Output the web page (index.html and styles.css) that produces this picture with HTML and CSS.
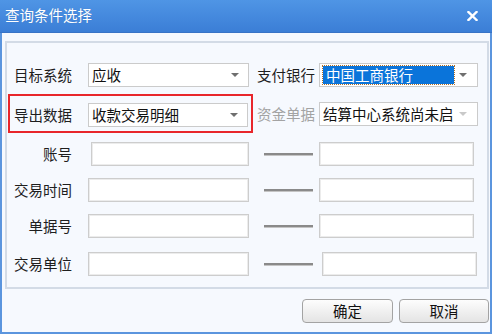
FILE: index.html
```html
<!DOCTYPE html>
<html lang="zh-CN">
<head>
    <meta charset="UTF-8">
    <title>查询条件选择</title>
    <link rel="stylesheet" href="styles.css">
</head>
<body>
    <div class="window">
        <div class="titlebar">
            <span class="title">查询条件选择</span>
            <svg class="close" width="11" height="10" viewBox="0 0 11 10">
                <path d="M1.5 1 L9.5 9 M9.5 1 L1.5 9" stroke="#fff" stroke-width="2.4" stroke-linecap="square"/>
            </svg>
        </div>

        <div class="window-body">
            <div class="group">
                <div class="row row-1">
                    <div class="left">
                        <label class="label">目标系统</label>
                        <div class="select select-left"><span class="value">应收</span><i class="arrow"></i></div>
                    </div>
                    <div class="right">
                        <label class="label">支付银行</label>
                        <div class="select select-right"><span class="selected">中国工商银行</span><i class="arrow"></i></div>
                    </div>
                </div>

                <div class="row row-2">
                    <div class="left highlight">
                        <label class="label">导出数据</label>
                        <div class="select select-left"><span class="value">收款交易明细</span><i class="arrow"></i></div>
                    </div>
                    <div class="right">
                        <label class="label disabled">资金单据</label>
                        <div class="select select-right"><span class="value">结算中心系统尚未启</span><i class="arrow arrow-disabled"></i></div>
                    </div>
                </div>

                <div class="row row-3">
                    <div class="left">
                        <label class="label">账号</label>
                        <input class="input input-account" type="text">
                    </div>
                    <div class="right">
                        <span class="dash"></span>
                        <input class="input input-right" type="text">
                    </div>
                </div>

                <div class="row row-4">
                    <div class="left">
                        <label class="label">交易时间</label>
                        <input class="input input-left" type="text">
                    </div>
                    <div class="right">
                        <span class="dash"></span>
                        <input class="input input-right" type="text">
                    </div>
                </div>

                <div class="row row-5">
                    <div class="left">
                        <label class="label">单据号</label>
                        <input class="input input-left" type="text">
                    </div>
                    <div class="right">
                        <span class="dash"></span>
                        <input class="input input-right" type="text">
                    </div>
                </div>

                <div class="row row-6">
                    <div class="left">
                        <label class="label">交易单位</label>
                        <input class="input input-left" type="text">
                    </div>
                    <div class="right">
                        <span class="dash"></span>
                        <input class="input input-right shifted" type="text">
                    </div>
                </div>
            </div>

            <div class="actions">
                <button class="btn btn-ok">确定</button>
                <button class="btn btn-cancel">取消</button>
            </div>
        </div>
    </div>
</body>
</html>
```

FILE: styles.css
```css
body {
    margin: 0;
    background-color: #ffffff;
    font-family: "Noto Sans CJK SC", "Noto Sans", sans-serif;
    font-size: 14.5px;
    color: #1e1e1e;
}

.window {
    width: 492px;
    height: 334px;
    display: flex;
    flex-direction: column;
}

/* Blue title bar */
.titlebar {
    height: 33px;
    box-sizing: border-box;
    background: linear-gradient(#4f95e5, #3b7ed6);
    border-bottom: 1px solid #3873c6;
    display: flex;
    align-items: center;
    justify-content: space-between;
    padding: 0 14px 0 5px;
    color: #ffffff;
}

.title {
    line-height: 1;
    margin-top: -2px;
    text-shadow: 0 0 1px rgba(0, 0, 0, 0.15);
}

.close {
    display: block;
    margin-top: -1px;
}

.window-body {
    flex: 1;
    background-color: #f6f9fe;
    border: 2px solid #5b95de;
    border-top: none;
    padding: 8px 1px 0 3px;
}

/* Group box with the query fields */
.group {
    height: 248px;
    box-sizing: border-box;
    border: 2px solid #d3dbe6;
    padding-top: 19px;
}

.row {
    display: flex;
    align-items: center;
    height: 24px;
}

.row-1 { height: 26px; }
.row-2 { height: 39px; margin-top: 6px; }
.row-3 { margin-top: 9px; }
.row-4 { margin-top: 12px; }
.row-5 { margin-top: 12px; }
.row-6 { margin-top: 14px; }

.left {
    width: 246px;
    box-sizing: border-box;
    padding-left: 7px;
    display: flex;
    align-items: center;
    height: 100%;
}

.left.highlight {
    width: 245px;
    margin-left: 1px;
    padding: 3px 0 0 4px;
    border: 2px solid #e8262b;
}

.right {
    display: flex;
    align-items: center;
    height: 100%;
    padding-left: 4px;
}

.label {
    display: block;
    width: 58px;
    text-align: right;
    white-space: nowrap;
    line-height: 20px;
}

.right .label {
    width: 56px;
}

.label.disabled {
    color: #a3a3a3;
}

/* Combo boxes */
.select {
    height: 24px;
    box-sizing: border-box;
    background-color: #ffffff;
    border: 1px solid #cbcbcb;
    display: flex;
    align-items: center;
    justify-content: space-between;
    padding: 0 9px 0 3px;
    overflow: hidden;
    color: #111;
}

.select-left {
    width: 161px;
    margin-left: 16px;
}

.highlight .select-left {
    width: 160px;
}

.select-right {
    width: 159px;
    margin-left: 6px;
    padding-right: 10px;
}

.value {
    display: block;
    max-width: 132px;
    white-space: nowrap;
    overflow: hidden;
    line-height: 20px;
}

.selected {
    display: block;
    width: 131px;
    height: 18px;
    box-sizing: border-box;
    padding-left: 3px;
    background-color: #0a74da;
    outline: 1px dotted #b0702a;
    color: #ffffff;
    line-height: 18px;
    white-space: nowrap;
}

.arrow {
    flex: none;
    width: 0;
    height: 0;
    border-left: 4px solid transparent;
    border-right: 4px solid transparent;
    border-top: 4px solid #6f6f6f;
}

.arrow-disabled {
    border-top-color: #c9c9c9;
}

/* Text inputs */
.input {
    height: 24px;
    box-sizing: border-box;
    margin: 0;
    border: 1px solid #cdcdcd;
    box-shadow: inset 0 0 0 1px #ececec;
    background-color: #ffffff;
    outline: none;
}

.input-left {
    width: 161px;
    margin-left: 16px;
}

.input-account {
    width: 158px;
    margin-left: 19px;
}

.input-right {
    width: 155px;
    margin-left: 6px;
}

.input-right.shifted {
    margin-left: 9px;
}

.dash {
    display: block;
    width: 49px;
    margin-left: 7px;
    border-top: 2px solid #8a8a8a;
    border-bottom: 1px solid #c4c4c4;
}

/* Bottom buttons */
.actions {
    display: flex;
    justify-content: flex-end;
    gap: 6px;
    margin-top: 10px;
}

.btn {
    height: 24px;
    box-sizing: border-box;
    border: 1px solid #a3a3a3;
    border-radius: 4px;
    background: linear-gradient(#fdfdfd, #e4e4e4);
    font-family: "Noto Sans CJK SC", "Noto Sans", sans-serif;
    font-size: 14.5px;
    color: #111;
    padding: 0;
    line-height: 1;
}

.btn-ok {
    width: 91px;
}

.btn-cancel {
    width: 90px;
}
```
